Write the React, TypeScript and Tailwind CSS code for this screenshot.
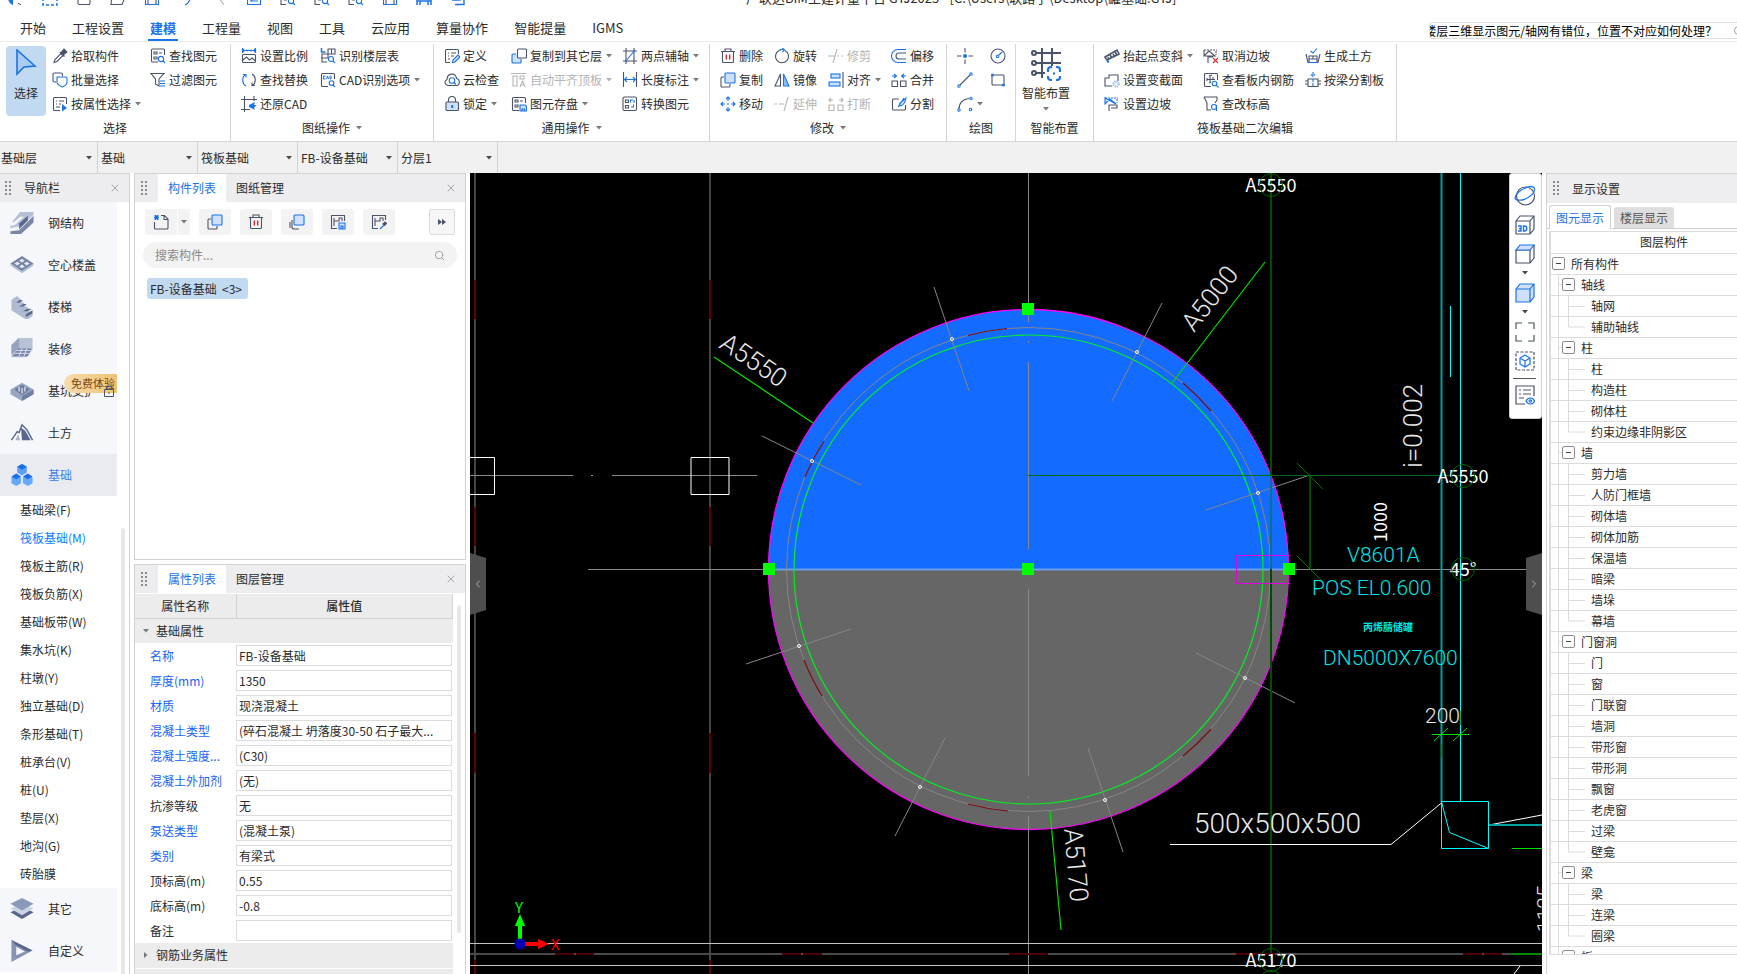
import type { ReactNode } from 'react'
import clsx from 'clsx'
import { X, Search, ChevronLeft, ChevronRight } from 'lucide-react'

const D = '#4a5369'
const B = '#1a73e8'
const L = '#cfe1fa'
const G = '#b5b5b5'
const R = '#d9282f'

const icons: Record<string, ReactNode> = {
  dropper: <><path d="M2 14.5l1-3 6-6 2 2-6 6z" /><path d="M8 4l4.5 4.5M9.5 4.5l2.5-3 2.5 2.5-3 2.5z" fill={D} strokeWidth="1.6" /></>,
  batch: <><path d="M4 10H2.5A1.5 1.5 0 0 1 1 8.5v-6A1.5 1.5 0 0 1 2.5 1H9a1.5 1.5 0 0 1 1.5 1.5V4" /><path d="M5 5h8.5A1.5 1.5 0 0 1 15 6.5v4c0 2-2.5 3.5-4.5 4.500C8 14 5 12.5 5 10z" stroke={B} fill="#fff" /></>,
  byProp: <><path d="M14.5 8V2.5a1 1 0 0 0-1-1h-11a1 1 0 0 0-1 1v11a1 1 0 0 0 1 1H8M4 5h1M7 5h5M4 8h1M7 8h2M4 11h4" /><path d="M10 8l5 4-5 3.500z" fill={B} stroke="none" /></>,
  findEl: <><path d="M14.5 7V2a1 1 0 0 0-1-1h-11a1 1 0 0 0-1 1v11a1 1 0 0 0 1 1H8M4 4h3v2H4zM9 5h3M4 9h3v2H4z" /><circle cx="11" cy="11" r="2.6" stroke={B} /><path d="M13 13l2 2" stroke={B} /></>,
  filter: <><path d="M1 1.5h13L9 7v7l-3.500-2V7z" /><path d="M10 9h5M10 11.5h5M10 14h5" stroke={B} /></>,
  scale: <><path d="M1 2.5h14M1.5 0v5M14.5 0v5M3 1L1.5 2.5 3 4M13 1l1.500 1.500L13 4M6 1.500v2M10 1.500v2" stroke={B} /><rect x="1.5" y="6.5" width="13" height="8" rx="1" /><path d="M2 12l3.500-3 3 3 2.500-2 3.500 3" /></>,
  swap: <><path d="M5 14C1 12 .5 5 4.5 2.5M2 2.5h3v3" stroke={B} /><path d="M11 2c4 2 4.500 9 .5 11.500M14 13.500h-3v-3" /></>,
  restore: <><path d="M0 3.5h16M0 13.5h9M3.5 0v16M13 0v5" /><path d="M8 9l6-3-1 3h2.500L13 12l1 2-6-3z" fill={B} stroke="none" /></>,
  floorTable: <><path d="M1.5 0v4h4" stroke={B} strokeWidth="1.5" /><path d="M8 4V1h7v5H8M8 6H2v8h5M1 10h7M8 4v6M11.500 1v5" /><circle cx="11" cy="11" r="2.5" stroke={B} /><path d="M13 13l2 2" stroke={B} /></>,
  cadOpt: <><path d="M14.5 7V2.5a1 1 0 0 0-1-1h-11a1 1 0 0 0-1 1v11a1 1 0 0 0 1 1H8" /><path d="M5.500 4h-2v3h2M6.500 7l1-3 1 3M10 4v3c2 0 2-3 0-3" stroke={B} strokeWidth="1" /><circle cx="11.5" cy="11" r="2.3" stroke={B} /><path d="M13 13l2 2" stroke={B} /></>,
  define: <><path d="M14.5 6V2.5a1 1 0 0 0-1-1h-11a1 1 0 0 0-1 1v11a1 1 0 0 0 1 1H6M4 5h1M7 5h5M4 8h1M7 8h3M4 11h2" /><path d="M8.500 14.500l.5-2.500 5-5 2 2-5 5z" stroke={B} fill={L} /></>,
  cloud: <><path d="M4 13.5C.5 13 0 9 3 7.500 3 1 12 0 12.500 6.500c4 .5 3.500 7 0 7z" /><circle cx="8" cy="8.5" r="2.8" stroke={B} /><path d="M10 10.500l2 2" stroke={B} /></>,
  lock: <><path d="M4.5 6V4a3.5 3.5 0 0 1 7 0v2" /><rect x="2" y="6" width="12.5" height="8.5" rx="1" fill={L} /><path d="M8.200 9v3" stroke={B} strokeWidth="2" /></>,
  copyFloor: <><path d="M5 6H2a1 1 0 0 0-1 1v7a1 1 0 0 0 1 1h7a1 1 0 0 0 1-1v-3" stroke={B} fill={L} /><rect x="6.5" y="1" width="9" height="9" rx="1" fill="#fff" /></>,
  alignTop: <g stroke={G}><path d="M0 1.5h15M2 4h4v10H2zM9 4h4v3H9z" /><path d="M9 15l2.500-6 2.500 6M10 13h3" /></g>,
  saveEl: <><path d="M14.5 7V2.5a1 1 0 0 0-1-1h-11a1 1 0 0 0-1 1v11a1 1 0 0 0 1 1H8M4 4h3v2H4zM9 5h3M4 9h3v2H4z" /><path d="M9 9h5l1.500 1.500V15H9zM11 15v-2h2.500v2" stroke={B} fill={L} /></>,
  aux: <><path d="M1 3h14M1 13h14M4 0v16M12 0v16" /><path d="M3 14L13 2" stroke={B} /></>,
  dim: <><path d="M1.5 0v15M14.5 0v15" /><path d="M2 7.500h12M5 5L2.500 7.500 5 10M11 5l2.500 2.500L11 10" stroke={B} /></>,
  convert: <><rect x="1" y="1" width="13.5" height="13.5" rx="1.5" /><path d="M3.500 4h3v2.500h-3zM3.500 9.500h3V12h-3z" /><path d="M8.500 6.500V4h2.500M12 4v3M9 11h2.500V8.500" stroke={B} /></>,
  trash: <><path d="M1 3.5h14M5 3V1h6v2M2.500 4v9.500a1 1 0 0 0 1 1h9a1 1 0 0 0 1-1V4" /><path d="M6.300 6.500v5M9.700 6.500v5" stroke={R} strokeWidth="1.4" /></>,
  rotate: <><path d="M5 2.5a6.500 6.500 0 1 0 6 0" /><path d="M5 2.500A6.500 6.500 0 0 1 10 1.500M8.500 0l2 2-2 2" stroke={B} /></>,
  trim: <path d="M0 8h7M9 1L5 15M9 8h2M13 8h2" stroke={G} />,
  offset: <><path d="M15 1.5H7a6.500 6.500 0 0 0 0 13h8" stroke={B} /><path d="M15 5H8a3 3 0 0 0 0 6h7" /></>,
  copy: <><path d="M4 5H2a1 1 0 0 0-1 1v8a1 1 0 0 0 1 1h7a1 1 0 0 0 1-1v-2" /><rect x="5" y="1" width="10" height="10" rx="1" stroke={B} fill={L} /></>,
  mirror: <><path d="M6.5 2v12H1z" /><path d="M9.500 2v12H15z" stroke={B} fill="#8ec1f8" /></>,
  align: <><path d="M15 0v16" /><rect x="3" y="2" width="9" height="4" stroke={B} fill={L} /><rect x="1" y="10" width="11" height="4" stroke={B} fill={L} /></>,
  merge: <><path d="M1 9h5.500v5.500H1zM9.500 9H15v5.500H9.500z" /><path d="M1 4h4M3 2l2.500 2L3 6M15 4h-4M13 2l-2.500 2L13 6" stroke={B} /></>,
  move: <path d="M8 1v4M8 11v4M1 8h4M11 8h4M6 3l2-2 2 2M6 13l2 2 2-2M3 6L1 8l2 2M13 6l2 2-2 2M8 7v2" stroke={B} />,
  extend: <path d="M0 8h3M5 8h5M14 1l-4 14" stroke={G} />,
  brk: <path d="M1 9h5v5.500H1zM10 9h5v5.500h-5zM1 4h4M3 2L1 4l2 2M15 4h-4M13 2l2 2-2 2" stroke={G} />,
  split: <><path d="M8 3H2.500a1 1 0 0 0-1 1v9a1 1 0 0 0 1 1h11a1 1 0 0 0 1-1V9" /><path d="M7 11l6-9M8 10c3 0 6-2 7-8l-6 5z" stroke={B} fill={L} /></>,
  point: <><path d="M8 0v4.500M8 11.500V16M0 8h4.500M11.500 8H16" /><circle cx="8" cy="8" r="2" fill={B} stroke="none" /></>,
  circle: <><circle cx="8" cy="8" r="7" /><circle cx="7.5" cy="8.5" r="1.2" stroke={B} /><path d="M8.500 7.500L12 4" stroke={B} /></>,
  line: <><path d="M3 13L13 3" /><circle cx="2" cy="14" r="1.2" stroke={B} /><circle cx="14" cy="2" r="1.2" stroke={B} /></>,
  rect: <><rect x="2" y="3" width="12" height="10" rx="1" /><circle cx="2.5" cy="3" r="1" stroke={B} /><circle cx="13.5" cy="13" r="1" stroke={B} /></>,
  arc: <><path d="M2 13C2 7 6 3 12 2.500" /><circle cx="2" cy="14" r="1.2" stroke={B} /><circle cx="14" cy="2.5" r="1.2" stroke={B} /><circle cx="13.5" cy="13.5" r="1.2" stroke={B} /></>,
  slope: <><path d="M1 9L13 2l2 4-12 6zM4 9l1 2M6 7l2 3M9 6l2 3M11 4l2 3" strokeWidth="1.6" /><circle cx="4" cy="13.5" r="1.3" fill={B} stroke="none" /></>,
  section: <><path d="M8 14H1V6h4V3h9v6" /><circle cx="12" cy="12" r="2.5" stroke="#8cb8f5" strokeDasharray="1 1" strokeWidth="2.5" /></>,
  edge: <><path d="M1 2h13M13 3v4" stroke={B} strokeDasharray="2 1" /><path d="M1 2v6l5-5 6 5z" stroke={B} fill={L} /><path d="M5 15V9h8v3H7" /></>,
  noEdge: <><path d="M1 2h13M13 3v4" strokeDasharray="2 1" /><path d="M1 2v6l5-5 6 5H2M5 15V9h5" /><path d="M10 10l5 5M15 10l-5 5" stroke={R} /></>,
  rebar: <><path d="M14.5 8V2.5a1 1 0 0 0-1-1h-11a1 1 0 0 0-1 1v11a1 1 0 0 0 1 1H8M4 9V6M7 3v8M4 7.500h8M10 5v3M6 4l3-1M6 11l2-1" /><circle cx="11.5" cy="11.5" r="2.3" stroke={B} /><path d="M13.500 13.500l2 2" stroke={B} /></>,
  level: <><path d="M1 1h13v3l-2 3M1 1l3 6v7h4" /><circle cx="11" cy="11" r="2.5" stroke={B} /><path d="M13.500 9v6" stroke={B} /></>,
  earth: <><path d="M1 6l2 8.500h10L15 6M4 11h8M8 8v3M4 14V8h8v6" /><path d="M5.500 3L8 5l4-4.500" stroke={B} /><path d="M3 14.500h10" stroke={B} /></>,
  beamSplit: <><path d="M0 9h3V7h10v2h3M0 12h3v2.500h10V12h3M3 7v7M13 7v7" /><path d="M8 0v4M6 2.500l2 2 2-2M8 7v8" stroke={B} strokeDasharray="3 1" /></>,
  newDoc: <><path d="M8 1.500h3.500L15 5v9a1 1 0 0 1-1 1H2.500a1 1 0 0 1-1-1V8M11 2v3.500h4" /><path d="M1 1h5v5H1z" fill={B} stroke="#f3f3f3" strokeDasharray="1 1" /></>,
  layers: <><path d="M3 6v7a2 2 0 0 0 2 2h5M1 8v6" /><rect x="5" y="1" width="10" height="10" rx="1" stroke={B} fill={L} /></>,
  saveStyle: <><path d="M14.5 7V1.500h-13v13H7M4 4v8M4 7h5V4h3v3" /><path d="M9 9h6v6H9zM11 15v-3h2v3" stroke={B} fill={L} /></>,
  pickStyle: <><path d="M14.5 6V1.500h-13v13H7M4 4v8M4 7h5V4h3v3" /><path d="M9 15l4-4" stroke={B} /><path d="M12 10l2-2 1.500 1.500-2 2z" fill={D} /></>,
  docA: <path d="M2 4v9a1.500 1.500 0 0 0 1.500 1.500h9A1.500 1.500 0 0 0 14 13V4" />,
  docDash: <path d="M1 3v12h14V3" stroke={B} strokeDasharray="3 2" strokeWidth="1.5" />,
  docFold: <path d="M2 4l-1 10.500h11l3-7H7" />,
  docSave: <><path d="M1.500 4v10.500h13V4z" stroke={B} /><path d="M4 14V9h8v5" stroke={D} /></>,
  undo: <path d="M7 15c3-1 4-3 5-6" stroke={B} />,
  redo: <path d="M7 8l5 7" stroke={G} />,
  sigma: <path d="M1.500 4v10.500h13V4M4 11h8M5 11l4-4" stroke={B} />,
  zoomA: <><path d="M1 8v6.500h5M4 10h3" stroke={D} /><circle cx="11" cy="11" r="2.6" stroke={B} /><path d="M13 13l2 2" stroke={B} /></>,
  barBox: <path d="M1 4v11M15 4v11M1 11h14M4 11v4M12 11v4" stroke={B} strokeWidth="1.5" />,
  layersB: <path d="M2 10h8V4M5 14.500h9V5" stroke={B} strokeWidth="1.4" />,
}

function Icon({ name, size = 16 }: { name: string; size?: number }) {
  return (
    <svg width={size} height={size} viewBox="0 0 16 16" fill="none" stroke={D} strokeWidth="1.1" className="shrink-0" aria-hidden="true">
      {icons[name]}
    </svg>
  )
}

function Caret({ className = 'text-[#7a7a7a]' }: { className?: string }) {
  return (
    <svg width="6" height="4" viewBox="0 0 6 4" className={clsx('shrink-0', className)} aria-hidden="true">
      <path d="M0 0h6L3 3.500z" fill="currentColor" />
    </svg>
  )
}

type ToolDef = { icon: string; label?: string; caret?: boolean; off?: boolean; title?: string }

function Tool({ icon, label, caret, off, title }: ToolDef) {
  return (
    <button type="button" aria-label={label ?? title} disabled={off} className={clsx('flex h-6 items-center gap-[3px] whitespace-nowrap', off && 'text-[#b4b4b4]')}>
      <Icon name={icon} />
      {label && <span>{label}</span>}
      {caret && <Caret className={clsx('ml-px', off ? 'text-[#b4b4b4]' : 'text-[#7a7a7a]')} />}
    </button>
  )
}

function Col({ className, items }: { className?: string; items: ToolDef[] }) {
  return (
    <div className={clsx('flex flex-col items-start', className)}>
      {items.map((t) => <Tool key={t.icon} {...t} />)}
    </div>
  )
}

function Group({ label, caret, className, children }: { label: string; caret?: boolean; className: string; children: ReactNode }) {
  return (
    <section className={clsx('flex shrink-0 flex-col border-r border-[#d6d6d6]', className)}>
      <div className="flex h-[74px] pl-2.5">{children}</div>
      <div className="flex h-5 items-center justify-center gap-1.5">
        {label}
        {caret && <Caret />}
      </div>
    </section>
  )
}

const quick = ['docDash', 'docA', 'docFold', 'docSave', 'undo', 'redo', 'sigma', 'zoomA', 'zoomA', 'zoomA', 'docSave', 'barBox', 'layersB']
const menus = ['开始', '工程设置', '建模', '工程量', '视图', '工具', '云应用', '算量协作', '智能提量', 'IGMS']

function TopBar() {
  return (
    <header className="bg-white">
      <div className="flex h-[14px] items-end overflow-hidden pl-2">
        <div className="-mt-4 mb-2 flex h-4 items-center gap-[18px]">
          <svg width="16" height="16" viewBox="0 0 16 16" aria-hidden="true"><path d="M1 2h4v13C2 14 0 11 0 8z" fill={B} /><path d="M10 13l3 2" stroke={D} /></svg>
          {quick.map((q, i) => <Icon key={i} name={q} />)}
          <Caret />
        </div>
        <h1 className="mb-2 ml-[256px] text-[13px] leading-4 whitespace-nowrap">广联达BIM土建计量平台 GTJ2025 - [C:\Users\联路宁\Desktop\罐基础.GTJ]</h1>
      </div>
      <div className="flex items-center justify-between">
        <nav className="flex h-[27px] gap-[22px] pl-[18px] text-[13px]">
          {menus.map((m) => (
            <a key={m} href="#" className={clsx('flex items-center border-b-2 px-[2px] pt-0.5 whitespace-nowrap', m === '建模' ? 'border-[#1a73e8] font-bold text-[#1a73e8]' : 'border-transparent')}>
              {m}
            </a>
          ))}
        </nav>
        <button type="button" className="mt-1.5 flex h-[17px] w-[308px] items-center justify-end overflow-hidden rounded-l-sm border border-r-0 border-[#dedede] text-black">
          <span className="shrink-0 whitespace-nowrap">楼层三维显示图元/轴网有错位，位置不对应如何处理？</span>
          <Search className="ml-2 size-3 shrink-0 translate-x-2 text-gray-400" />
        </button>
      </div>
    </header>
  )
}

function Ribbon() {
  return (
    <div className="flex h-[101px] shrink-0 overflow-hidden border-y border-t-[#ededed] border-b-[#d6d6d6] bg-white pt-0.5">
      <Group label="选择" className="w-[231px]">
        <button type="button" className="mt-0.5 -ml-1 flex h-[70px] w-10 shrink-0 flex-col items-center gap-2 rounded-sm bg-[#c2d9f2] pt-[3px]">
          <svg width="22" height="28" viewBox="0 0 22 28" fill="#a9cbf4" stroke={B} strokeWidth="1.6" aria-hidden="true"><path d="M2 1v24l7-7 11-1z" /></svg>
          选择
        </button>
        <Col className="ml-1.5 w-[98px]" items={[{ icon: 'dropper', label: '拾取构件' }, { icon: 'batch', label: '批量选择' }, { icon: 'byProp', label: '按属性选择', caret: true }]} />
        <Col items={[{ icon: 'findEl', label: '查找图元' }, { icon: 'filter', label: '过滤图元' }]} />
      </Group>
      <Group label="图纸操作" caret className="w-[203px]">
        <Col className="w-[79px]" items={[{ icon: 'scale', label: '设置比例' }, { icon: 'swap', label: '查找替换' }, { icon: 'restore', label: '还原CAD' }]} />
        <Col items={[{ icon: 'floorTable', label: '识别楼层表' }, { icon: 'cadOpt', label: 'CAD识别选项', caret: true }]} />
      </Group>
      <Group label="通用操作" caret className="w-[276px]">
        <Col className="w-[67px]" items={[{ icon: 'define', label: '定义' }, { icon: 'cloud', label: '云检查' }, { icon: 'lock', label: '锁定', caret: true }]} />
        <Col className="w-[111px]" items={[{ icon: 'copyFloor', label: '复制到其它层', caret: true }, { icon: 'alignTop', label: '自动平齐顶板', caret: true, off: true }, { icon: 'saveEl', label: '图元存盘', caret: true }]} />
        <Col items={[{ icon: 'aux', label: '两点辅轴', caret: true }, { icon: 'dim', label: '长度标注', caret: true }, { icon: 'convert', label: '转换图元' }]} />
      </Group>
      <Group label="修改" caret className="w-[237px]">
        <Col className="w-[54px]" items={[{ icon: 'trash', label: '删除' }, { icon: 'copy', label: '复制' }, { icon: 'move', label: '移动' }]} />
        <Col className="w-[54px]" items={[{ icon: 'rotate', label: '旋转' }, { icon: 'mirror', label: '镜像' }, { icon: 'extend', label: '延伸', off: true }]} />
        <Col className="w-[63px]" items={[{ icon: 'trim', label: '修剪', off: true }, { icon: 'align', label: '对齐', caret: true }, { icon: 'brk', label: '打断', off: true }]} />
        <Col items={[{ icon: 'offset', label: '偏移' }, { icon: 'merge', label: '合并' }, { icon: 'split', label: '分割' }]} />
      </Group>
      <Group label="绘图" className="w-[69px]">
        <Col className="w-[33px]" items={[{ icon: 'point', title: '点' }, { icon: 'line', title: '直线' }, { icon: 'arc', title: '弧', caret: true }]} />
        <Col items={[{ icon: 'circle', title: '圆' }, { icon: 'rect', title: '矩形' }]} />
      </Group>
      <Group label="智能布置" className="w-[78px]">
        <button type="button" className="-ml-1 flex shrink-0 flex-col items-center pt-1">
          <svg width="32" height="34" viewBox="0 0 32 34" fill="none" stroke={D} strokeWidth="2" aria-hidden="true">
            <path d="M6 5h25M6 15h25M6 25h9M12 0v30M22 0v18" />
            <circle cx="4" cy="5" r="2" /><circle cx="4" cy="15" r="2" /><circle cx="4" cy="25" r="2" />
            <path d="M18 24v-2a3 3 0 0 1 3-3h1M26 19h1a3 3 0 0 1 3 3v2M30 28v1a3 3 0 0 1-3 3h-1M22 32h-1a3 3 0 0 1-3-3v-1M23 25.500h2" stroke={B} strokeWidth="2.2" />
          </svg>
          <span className="mt-0.5 leading-[18px]">智能布置</span>
          <Caret className="mt-[5px] text-[#7a7a7a]" />
        </button>
      </Group>
      <Group label="筏板基础二次编辑" className="w-[303px]">
        <Col className="w-[99px]" items={[{ icon: 'slope', label: '抬起点变斜', caret: true }, { icon: 'section', label: '设置变截面' }, { icon: 'edge', label: '设置边坡' }]} />
        <Col className="w-[102px]" items={[{ icon: 'noEdge', label: '取消边坡' }, { icon: 'rebar', label: '查看板内钢筋' }, { icon: 'level', label: '查改标高' }]} />
        <Col items={[{ icon: 'earth', label: '生成土方' }, { icon: 'beamSplit', label: '按梁分割板' }]} />
      </Group>
    </div>
  )
}

const selectors = [['楼层', '基础层'], ['构件类别', '基础'], ['构件类型', '筏板基础'], ['构件', 'FB-设备基础'], ['分层', '分层1']]

function SelectorBar() {
  return (
    <div className="flex h-[31px] shrink-0 bg-[#f1f1f1]">
      {selectors.map(([name, value], i) => (
        <div key={name} className={clsx('relative flex items-center border-r border-[#d2d2d2]', i === 0 ? 'w-[98px]' : 'w-[100px]')}>
          <select aria-label={name} className={clsx('h-full w-full appearance-none bg-transparent outline-none', i === 0 ? 'pl-px' : 'pl-[3px]')}>
            <option>{value}</option>
          </select>
          <Caret className="pointer-events-none absolute right-[5px] text-[#4a4a4a]" />
        </div>
      ))}
    </div>
  )
}

function Grip() {
  return (
    <svg width="6" height="15" viewBox="0 0 6 15" fill="#8a8a8a" aria-hidden="true">
      {[0, 4, 8, 12].map((y) => <path key={y} d={`M0 ${y}h2v2h-2zM4 ${y}h2v2h-2z`} />)}
    </svg>
  )
}

const navIcons: Record<string, ReactNode> = {
  钢结构: <><path d="M10 1h14v3L12 15 0 18v-3h4L14 6h-4l-7 6-1-1z" fill="#b5bfd5" /><path d="M24 5v7L11 24H0v-3l9-1 12-12z" fill="#7886a8" /><path d="M9 13l9-8v5l-9 9z" fill="#56668c" /></>,
  空心楼盖: <><path d="M0 11L12 3l12 8-12 8z" fill="#7483a6" /><path d="M12 21L0 13v-2l12 8 12-8v2z" fill="#b3bdd3" /><path d="M4 11l3-2 3 2-3 2zM9 8l3-2 3 2-3 2zM14 11l3-2 3 2-3 2zM9 14l3-2 3 2-3 2z" fill="#e3e9f3" /></>,
  楼梯: <><path d="M1 5l6-4 3 3v3l4 1v3l4 2v3l5 3v3l-6 4L1 16z" fill="#b0bad1" /><path d="M10 5l-4 3h3l4-2zM14 9l-5 3h4l4-2zM18 14l-5 3h4l5-2zM23 19l-7 4v-3l7-4z" fill="#56668c" /></>,
  装修: <><path d="M8 1h15v12l-6 8H1V9z" fill="#b9c2d6" /><path d="M1 8l8-7v11l-8 6z" fill="#97a4c0" /><path d="M8 12h14l-4 8H2z" fill="#7685a8" /><path d="M6 14h15M4 17h15M12 12l-3 8M17 12l-3 8" stroke="#dce2ee" /></>,
  基坑支护: <><path d="M0 11l12-7 12 7v5l-12 7L0 16z" fill="#98a5c1" /><path d="M4 11l8-5 8 5-8 6z" fill="#6b7a9f" /><path d="M9 8v5M12 9v6M15 8v5" stroke="#d4dbe9" strokeWidth="1.5" /><path d="M12 18l12-7v5l-12 7z" fill="#6f7fa3" /></>,
  土方: <><path d="M1 20l6-9 2 1 3-8 5 5 6 11" stroke="#586788" strokeWidth="1.5" fill="none" /><path d="M11 7l4 3 2 3 4 7h-9z" fill="#56668c" /><path d="M5 20l3-6 2 6z" fill="#a6b1ca" /></>,
  基础: <><path d="M12 1l5 3v6l-5 3-5-3V4z" fill="#5da2f6" /><path d="M12 1l5 3-5 3-5-3z" fill="#1a6fe8" /><path d="M6 12l5 3v6l-5 3-5-3v-6zM18 12l5 3v6l-5 3-5-3v-6z" fill="#65a9f8" /><path d="M6 11l5 3-5 3-5-3zM18 11l5 3-5 3-5-3z" fill="#1a6fe8" /></>,
  其它: <><path d="M0 16l12-6 12 6-12 7z" fill="#56668c" /><path d="M0 12l12-6 12 6-12 7z" fill="#ccd4e2" /><path d="M0 7l12-6 12 6-12 7z" fill="#8b99b9" /></>,
  自定义: <><path d="M1 1l22 11L1 24z" fill="#8794b3" /><path d="M1 1l22 11-5 1L5 6z" fill="#56668c" /><path d="M6 8l9 5-9 4z" fill="#f5f7fa" /></>,
}

const navTop = ['钢结构', '空心楼盖', '楼梯', '装修', '基坑支护', '土方', '基础']
const navSub = ['基础梁(F)', '筏板基础(M)', '筏板主筋(R)', '筏板负筋(X)', '基础板带(W)', '集水坑(K)', '柱墩(Y)', '独立基础(D)', '条形基础(T)', '桩承台(V)', '桩(U)', '垫层(X)', '地沟(G)', '砖胎膜']

function NavItem({ label }: { label: string }) {
  const active = label === '基础'
  return (
    <a href="#" className={clsx('relative flex h-[42px] w-[117px] shrink-0 items-center gap-[14px] overflow-hidden pl-2.5', active ? 'bg-[#e9ebf1] text-[#3f7fe8]' : 'bg-[#f5f7fa]')}>
      <svg width="24" height="24" viewBox="0 0 24 25" aria-hidden="true">{navIcons[label]}</svg>
      <span className="whitespace-nowrap">{label}</span>
      {label === '基坑支护' && (
        <>
          <span className="absolute top-1 left-16 w-16 rounded-l-full bg-gradient-to-r from-[#f6dcae] to-[#eebd62] pl-[7px] text-[11px] leading-[19px] text-[#7a4712]">免费体验</span>
          <svg width="10" height="11" viewBox="0 0 10 11" fill="none" stroke="#4a5369" className="absolute top-4 left-[104px]" aria-hidden="true">
            <path d="M.5 3.5h9v7h-9zM2.5 3V.5h5V3M5 6v2" />
          </svg>
        </>
      )}
    </a>
  )
}

function NavPanel() {
  return (
    <aside className="flex w-[130px] shrink-0 flex-col overflow-hidden border-t border-r border-[#d2d2d2] bg-white">
      <div className="flex h-[28px] shrink-0 items-center bg-[#ededef] pr-2 pl-[5px]">
        <Grip />
        <span className="ml-[13px] flex-1">导航栏</span>
        <button type="button" aria-label="关闭导航栏"><X className="size-3 text-[#909090]" strokeWidth={1.5} /></button>
      </div>
      {navTop.map((n) => <NavItem key={n} label={n} />)}
      <div className="relative">
        <ul>
          {navSub.map((n) => (
            <li key={n} className="h-7 pl-5 leading-7">
              <a href="#" className={clsx(n === '筏板基础(M)' && 'text-[#0a7cff]')}>{n}</a>
            </li>
          ))}
        </ul>
        <div className="absolute top-8 right-1 h-[600px] w-1 rounded-full bg-[#e8e8e8]" />
      </div>
      <NavItem label="其它" />
      <NavItem label="自定义" />
    </aside>
  )
}

function PanelTabs({ tabs }: { tabs: [string, string] }) {
  return (
    <div className="flex h-7 shrink-0 items-stretch bg-[#ededef]">
      <div className="flex w-[23px] items-center pl-1.5"><Grip /></div>
      <button type="button" className="bg-white px-2.5 text-[#1a73e8]">{tabs[0]}</button>
      <button type="button" className="px-2.5">{tabs[1]}</button>
      <button type="button" aria-label="关闭" className="ml-auto pr-2"><X className="size-3 text-[#909090]" strokeWidth={1.5} /></button>
    </div>
  )
}

function ComponentPanel() {
  return (
    <section className="flex h-[387px] shrink-0 flex-col border border-[#d2d2d2] bg-white">
      <PanelTabs tabs={['构件列表', '图纸管理']} />
      <div className="mx-2.5 mt-[7px] flex gap-[9px]">
        <div className="flex gap-px">
          <button type="button" aria-label="新建" className="grid h-[26px] w-8 place-items-center rounded-l-[3px] bg-[#f3f3f3]"><Icon name="newDoc" /></button>
          <button type="button" aria-label="新建选项" className="grid h-[26px] w-3 place-items-center rounded-r-[3px] bg-[#f3f3f3]"><Caret /></button>
        </div>
        {['copy', 'trash', 'layers', 'saveStyle', 'pickStyle'].map((n) => (
          <button key={n} type="button" aria-label={n} className="grid h-[26px] w-8 place-items-center rounded-[3px] bg-[#f3f3f3]"><Icon name={n} /></button>
        ))}
        <button type="button" aria-label="更多" className="ml-auto grid h-[26px] w-[26px] place-items-center rounded-[3px] border border-[#dadada] bg-[#f6f6f6]">
          <svg width="8" height="6" viewBox="0 0 8 6" fill={D} aria-hidden="true"><path d="M0 0l4 3-4 3zM4 0l4 3-4 3z" /></svg>
        </button>
      </div>
      <label className="mx-2 mt-[7px] flex h-[26px] items-center rounded-full bg-[#f3f3f3] pr-3 pl-3">
        <input aria-label="搜索构件" placeholder="搜索构件..." className="min-w-0 flex-1 bg-transparent outline-none placeholder:text-[#8a8a8a]" />
        <Search className="size-[11px] text-[#9a9a9a]" />
      </label>
      <button type="button" className="mt-2.5 ml-3 self-start rounded-[3px] bg-[#c2d9f2] pr-1.5 pl-[3px] leading-[21px] whitespace-pre">{'FB-设备基础  <3>'}</button>
    </section>
  )
}

const props: [string, string, boolean][] = [
  ['名称', 'FB-设备基础', true],
  ['厚度(mm)', '1350', true],
  ['材质', '现浇混凝土', true],
  ['混凝土类型', '(碎石混凝土 坍落度30-50 石子最大...', true],
  ['混凝土强度...', '(C30)', true],
  ['混凝土外加剂', '(无)', true],
  ['抗渗等级', '无', false],
  ['泵送类型', '(混凝土泵)', true],
  ['类别', '有梁式', true],
  ['顶标高(m)', '0.55', false],
  ['底标高(m)', '-0.8', false],
  ['备注', '', false],
]

function PropertyPanel() {
  return (
    <section className="mt-1 flex min-h-0 flex-1 flex-col border border-b-0 border-[#d2d2d2] bg-white">
      <PanelTabs tabs={['属性列表', '图层管理']} />
      <div className="flex min-h-0 flex-1 overflow-hidden">
        <table className="mt-px h-fit w-[318px] table-fixed border-collapse">
          <thead>
            <tr className="h-6 bg-[#ececec]">
              <th className="w-[101px] border-r border-b border-[#d2d2d2] font-normal">属性名称</th>
              <th className="border-r border-b border-[#d2d2d2] font-medium">属性值</th>
            </tr>
          </thead>
          <tbody>
            <tr className="h-[25px] bg-[#ececec]">
              <td colSpan={2} className="p-0"><button type="button" className="flex items-center gap-[7px] pl-2"><Caret />基础属性</button></td>
            </tr>
            {props.map(([name, value, blue]) => (
              <tr key={name} className="h-[25px]">
                <td className={clsx('p-0 pl-[15px] whitespace-nowrap', blue && 'text-[#1764f5]')}>{name}</td>
                <td className="p-0 pr-px"><input aria-label={name} defaultValue={value} className="block h-[21px] w-full border border-[#dcdcdc] px-[2px] outline-none" /></td>
              </tr>
            ))}
            <tr className="h-[25px] border-b border-white bg-[#ececec]">
              <td colSpan={2} className="p-0">
                <button type="button" className="flex items-center gap-[7px] pl-2"><Caret className="-rotate-90 text-[#7a7a7a]" />钢筋业务属性</button>
              </td>
            </tr>
            <tr className="h-6 bg-[#ececec]"><td colSpan={2} className="p-0" /></tr>
          </tbody>
        </table>
        <div className="mt-3 ml-1 h-[328px] w-1 rounded-full bg-[#e8e8e8]" />
      </div>
    </section>
  )
}

const cross = [
  [1137, 352, 1162, 303, 1112, 401], [1258, 493, 1206, 510, 1310, 475], [952, 339, 934, 287, 969, 391], [812, 461, 762, 436, 861, 485],
  [1245, 678, 1196, 653, 1295, 703], [1105, 800, 1088, 748, 1123, 852], [799, 646, 746, 664, 851, 629], [920, 787, 895, 836, 945, 738],
]
const marks: [number, number, string][] = [[1271, 185, 'A5550'], [1463, 476, 'A5550'], [1463, 569, '45°'], [1271, 960, 'A5170']]

// Plan view; one unit of the view box is one pixel at the default window size.
function Drawing() {
  return (
    <svg className="absolute inset-0 size-full" viewBox="470 173 1072 801" preserveAspectRatio="xMinYMin slice" fill="none" strokeWidth="1" role="img" aria-label="筏板基础平面图">
      <path d="M475 173v801M710 173v801M1028.500 173v130M1028.500 816v158" stroke="#8a8a8a" />
      <path d="M475 280v39M710 280v39M475 507v39M710 507v39M475 733v40M710 733v40M475 960v14M710 960v14" stroke="#5c0000" strokeWidth="2" />
      <path d="M470 475.500h103M591 475.500h2M612 475.500h145" stroke="#8a8a8a" />
      <path d="M466 457.500h28.500v37H466M691 457.500h38v37h-38z" stroke="#fff" />
      <path d="M588 569.500h955" stroke="#8a8a8a" />
      <circle cx="1028.5" cy="569.5" r="260" fill="#666" />
      <path d="M768.500 569.500a260 260 0 0 1 520 0z" fill="#136cff" />
      <path d="M768.500 569.500h520" stroke="#6b9de8" strokeWidth="2" />
      <circle cx="1028.5" cy="569.5" r="260" stroke="#ff00ff" strokeWidth="1.3" />
      <path d="M1028.500 310v12M1028.500 341v2M1028.500 362v187M1028.500 589v187M1028.500 796v2M1028.500 816v14" stroke="#8a8a8a" />
      <circle cx="1028.5" cy="569.5" r="242" stroke="#868686" />
      <g stroke="#7a0a14" strokeWidth="1.2">
        <path d="M968 335.500A242 242 0 0 1 1007 328.500M805 477A242 242 0 0 1 824 441M1183 383A242 242 0 0 1 1211 411" />
        <path d="M1211 729A242 242 0 0 1 1183 756M1008 811A242 242 0 0 1 968 804M822 696A242 242 0 0 1 804 660" />
      </g>
      <circle cx="1028.5" cy="569.5" r="234.5" stroke="#00f020" strokeWidth="1.2" />
      {cross.map(([x, y, x1, y1, x2, y2]) => (
        <g key={`${x}-${y}`}>
          <path d={`M${x1} ${y1}L${x2} ${y2}`} stroke="#858585" />
          <circle cx={x} cy={y} r="1.5" stroke="#fff" />
        </g>
      ))}
      <g stroke="#004d00">
        <path d="M1271 173v787M1310 476v93" strokeWidth="2" />
        <path d="M1028 475.500h435" stroke="#006a1a" />
        <path d="M1271 476v93" stroke="#0b6f8a" strokeWidth="2" />
        <path d="M1297 463l26 26M1297 556l26 26" stroke="#007a00" />
      </g>
      <path d="M1236.500 555.500h52v28h-52z" stroke="#e000e0" />
      <path d="M714 357l99 66M1172 383l93-121M1050 811l11 119" stroke="#00e000" strokeWidth="1.2" />
      <path d="M1022 303h12v12h-12zM763 563h12v12h-12zM1022 563h12v12h-12zM1283 563h12v12h-12z" fill="#0f0" />

      <path d="M470 943.500h1072M470 965.500h1072" stroke="#c4c4c4" />
      <path d="M470 954h1072" stroke="#4a4a4a" strokeWidth="2" />
      <path d="M555 954h19M576 954h18M782 954h19M803 954h19M1009 954h39M1236 954h39M1463 954h19M1484 954h18" stroke="#4a0000" strokeWidth="2" />
      <path d="M1512 954h30" stroke="#008a00" strokeWidth="2" />
      <path d="M1512 848.500h30" stroke="#00e000" />
      <path d="M1170 844.500h221l51-42M1489 825l53-10M1520 966l-6 8" stroke="#fff" />
      <path d="M1441.500 173v629M1489 825h53" stroke="#00a0a0" strokeWidth="2" />
      <path d="M1460.500 173v629M1450.500 306v71M1441.500 801.500h47v47h-47zl8 31 39 16" stroke="#00ffff" />
      <path d="M1432 734.500h37M1434 741l14-13M1453 741l14-13" stroke="#00e000" />
      <path d="M1441 744v14M1460 711v14" stroke="#006000" />

      {marks.map(([x, y, t]) => (
        <g key={`${x}-${y}`}>
          <text x={x} y={y + 7} textAnchor="middle" fill="#fff" className="text-[18px]">{t}</text>
          <circle cx={x} cy={y} r="11.5" stroke="#006800" />
        </g>
      ))}
      <circle cx="1271" cy="982" r="11.5" stroke="#006800" />
      <text transform="translate(1387 542) rotate(-90)" fill="#fff" className="text-[18px]">1000</text>

      <g fill="#e8e8e8" className="font-[Roboto,sans-serif] font-light">
        <text transform="translate(718 347) rotate(34)" className="text-[26px]">A5550</text>
        <text transform="translate(1194 333) rotate(-52)" className="text-[26px]">A5000</text>
        <text transform="translate(1064 829) rotate(85)" className="text-[26px]">A5170</text>
        <text transform="translate(1422 468) rotate(-90)" className="text-[26px]">i=0.002</text>
        <text transform="translate(1552 932) rotate(-90)" className="text-[21px]">1125</text>
        <text x="1425" y="723" className="text-[21px]">200</text>
        <text x="1194" y="833" className="text-[28px]">500x500x500</text>
      </g>
      <g fill="#00e5e5" className="font-[Roboto,sans-serif] font-light">
        <text x="1347" y="562" className="text-[21px]">V8601A</text>
        <text x="1312" y="595" className="text-[21px]">POS EL0.600</text>
        <text x="1323" y="665" className="text-[21px]">DN5000X7600</text>
      </g>
      <text x="1363" y="631" fill="#00e5e5" className="text-[10px] font-bold">丙烯腈储罐</text>

      <path d="M520 944v-20" stroke="#0f0" strokeWidth="4" />
      <path d="M515 926l5-12 5 12z" fill="#0f0" />
      <path d="M520 944h20" stroke="#f00" strokeWidth="4" />
      <path d="M538 939l11 5-11 5z" fill="#f00" />
      <circle cx="520" cy="944" r="5.5" fill="#0000b4" />
      <text x="515" y="913" fill="#0f0" className="text-[15px]">Y</text>
      <text x="551" y="950" fill="#f00" className="text-[15px]">X</text>
    </svg>
  )
}

const viewIcons: Record<string, ReactNode> = {
  环绕: <><circle cx="10.5" cy="10" r="9" /><path d="M5 14C-3 15 0 9 5 5 12 0 20-1 19.500 3.500 19 9 10 14.500 5 14z" stroke={B} /></>,
  三维: <><path d="M1 6h14v13H1zM1 6l4-5h14v13l-4 5M15 6l4-5" /><path d="M3 11h3v5H3M4 13.500h2M8.500 11v5h1c3 0 3-5 0-5z" stroke={B} strokeWidth="1.4" /></>,
  俯视: <><path d="M1 6h14v13H1zM19 1v13l-4 5" /><path d="M1 6l4-5h14l-4 5z" stroke={B} fill={L} /></>,
  实体: <path d="M1 6l4-5h14v13l-4 5H1zM1 6h14v13M15 6l4-5" stroke={B} fill={L} />,
  全屏: <path d="M1 7V1h6M13 1h6v6M19 13v6h-6M7 19H1v-6" />,
  局部三维: <><rect x="1" y="1" width="18" height="18" strokeDasharray="3 1.5" /><path d="M10 4l5 3v6l-5 3-5-3V7zM5 7l5 3 5-3M10 10v6" stroke={B} /></>,
  显示设置: <><path d="M19 11V1H1v18h9M4 5h2M8 5h8M4 9h2M8 9h8M4 13h5" /><path d="M11 16c2-4 7-4 8.500 0-1.500 4-6.500 4-8.500 0z" stroke={B} /><circle cx="15.3" cy="16" r="1.2" stroke={B} /></>,
}

function ViewButton({ name }: { name: string }) {
  return (
    <button type="button" aria-label={name} className="mb-[9px]">
      <svg width="20" height="20" viewBox="0 0 20 20" fill="none" stroke={D} strokeWidth="1.2" className="overflow-visible" aria-hidden="true">{viewIcons[name]}</svg>
    </button>
  )
}

function Canvas() {
  return (
    <main className="relative min-w-0 flex-1 overflow-hidden bg-black">
      <Drawing />
      <button type="button" aria-label="收起左侧" className="absolute top-[380px] left-0 grid h-[62px] w-4 place-items-center bg-[#4e4e4e] text-[#aaa] [clip-path:polygon(0_0,100%_5px,100%_57px,0_100%)]">
        <ChevronLeft className="size-3" />
      </button>
      <button type="button" aria-label="收起右侧" className="absolute top-[380px] right-0 grid h-[62px] w-4 place-items-center bg-[#4e4e4e] text-[#aaa] [clip-path:polygon(0_5px,100%_0,100%_100%,0_57px)]">
        <ChevronRight className="size-3" />
      </button>
      <div className="absolute top-0 right-0 flex w-[33px] flex-col items-center rounded-[3px] border border-[#d2d2d2] bg-white pt-3 pr-0.5 pb-1">
        <ViewButton name="环绕" />
        <ViewButton name="三维" />
        <ViewButton name="俯视" />
        <Caret className="-mt-0.5 mb-2 text-[#4a4a4a]" />
        <ViewButton name="实体" />
        <Caret className="-mt-0.5 mb-2 text-[#4a4a4a]" />
        <ViewButton name="全屏" />
        <ViewButton name="局部三维" />
        <div className="-mt-0.5 mb-1.5 h-px w-[23px] bg-[#555]" />
        <ViewButton name="显示设置" />
      </div>
    </main>
  )
}

const tree: [string, string[]][] = [
  ['轴线', ['轴网', '辅助轴线']],
  ['柱', ['柱', '构造柱', '砌体柱', '约束边缘非阴影区']],
  ['墙', ['剪力墙', '人防门框墙', '砌体墙', '砌体加筋', '保温墙', '暗梁', '墙垛', '幕墙']],
  ['门窗洞', ['门', '窗', '门联窗', '墙洞', '带形窗', '带形洞', '飘窗', '老虎窗', '过梁', '壁龛']],
  ['梁', ['梁', '连梁', '圈梁']],
  ['板', []],
]

function Toggle() {
  return (
    <button type="button" aria-label="折叠" className="grid size-[13px] shrink-0 place-items-center rounded-[2px] border border-[#8c8c8c] bg-white">
      <span className="h-px w-[5px] bg-[#444]" />
    </button>
  )
}

// Vertical guide on the left, then the node or the leaf with its own branch line.
function TreeRow({ label, leaf, last }: { label: string; leaf?: boolean; last?: boolean }) {
  return (
    <tr className="h-[21px] border-b border-[#dcdcdc]">
      <td className="p-0">
        <div className="ml-[7px] flex h-5 items-center border-l border-[#dcdcdc]">
          {leaf ? (
            <>
              <svg width="28" height="20" viewBox="0 0 28 20" className="ml-1 shrink-0" fill="none" stroke="#dcdcdc" aria-hidden="true">
                <path d={last ? 'M5.5 0v10H22' : 'M5.5 0v20M5.5 10.5H22'} />
              </svg>
              <span className="whitespace-nowrap">{label}</span>
            </>
          ) : (
            <>
              <span className="h-px w-[3px] bg-[#dcdcdc]" />
              <Toggle />
              <span className="ml-1.5">{label}</span>
            </>
          )}
        </div>
      </td>
    </tr>
  )
}

function DisplayPanel() {
  return (
    <aside className="ml-1 flex w-[191px] shrink-0 flex-col overflow-hidden border-t border-l border-[#d2d2d2] bg-white">
      <div className="flex h-[29px] shrink-0 items-center gap-[13px] bg-[#eeeef0] pl-[6px]">
        <Grip />
        显示设置
      </div>
      <div className="mt-0.5 flex h-6 shrink-0 items-end gap-[3px] border-b border-[#cfcfcf] pl-0.5">
        <button type="button" className="-mb-px h-6 rounded-t-[3px] border border-b-0 border-[#cfcfcf] bg-white px-1.5 text-[#1a73e8]">图元显示</button>
        <button type="button" className="h-[21px] rounded-t-[3px] bg-[#dedede] px-1.5 text-[#555]">楼层显示</button>
      </div>
      <div className="mt-0.5 ml-0.5 h-[724px] overflow-hidden border-y border-l-2 border-[#dcdcdc]">
        <table className="w-[226px] border-collapse">
          <thead>
            <tr className="h-[21px] border-b border-[#dcdcdc]"><th className="p-0 font-normal">图层构件</th></tr>
          </thead>
          <tbody>
            <tr className="h-[21px] border-b border-[#dcdcdc]">
              <td className="p-0"><div className="flex h-5 items-center gap-1.5 pl-px"><Toggle />所有构件</div></td>
            </tr>
            {tree.map(([name, kids]) => [
              <TreeRow key={name} label={name} />,
              ...kids.map((k, i) => <TreeRow key={`${name}/${k}`} label={k} leaf last={i === kids.length - 1} />),
            ])}
          </tbody>
        </table>
      </div>
    </aside>
  )
}

export default function App() {
  return (
    <div className='flex h-screen flex-col overflow-hidden bg-white font-["Noto_Sans_CJK_SC",sans-serif] text-xs text-[#2b2b2b]'>
      <TopBar />
      <Ribbon />
      <SelectorBar />
      <div className="flex min-h-0 flex-1">
        <NavPanel />
        <div className="mx-1 flex w-[332px] shrink-0 flex-col">
          <ComponentPanel />
          <PropertyPanel />
        </div>
        <Canvas />
        <DisplayPanel />
      </div>
    </div>
  )
}
